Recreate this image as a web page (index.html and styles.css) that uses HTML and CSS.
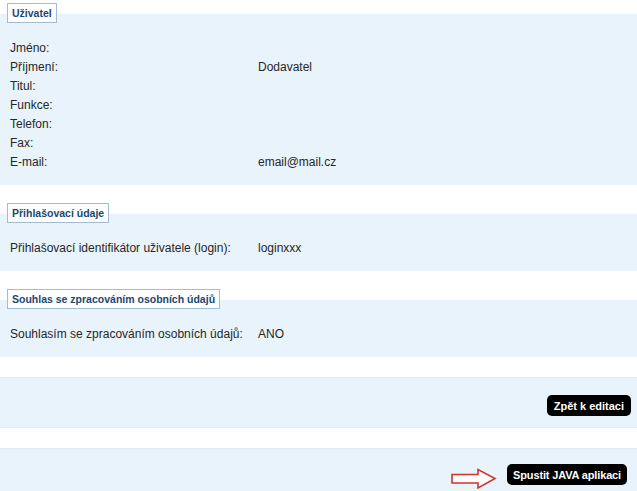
FILE: index.html
```html
<!DOCTYPE html>
<html lang="cs">
<head>
    <meta charset="UTF-8">
    <meta name="viewport" content="width=device-width, initial-scale=1.0">
    <title>Uživatel</title>
    <link rel="stylesheet" href="styles.css">
</head>
<body>
    <div class="panel">
        <div class="legend">Uživatel</div>
        <div class="rows">
            <span>Jméno:</span><span></span>
            <span>Příjmení:</span><span>Dodavatel</span>
            <span>Titul:</span><span></span>
            <span>Funkce:</span><span></span>
            <span>Telefon:</span><span></span>
            <span>Fax:</span><span></span>
            <span>E-mail:</span><span>email@mail.cz</span>
        </div>
    </div>

    <div class="panel">
        <div class="legend">Přihlašovací údaje</div>
        <div class="rows">
            <span>Přihlašovací identifikátor uživatele (login):</span><span>loginxxx</span>
        </div>
    </div>

    <div class="panel">
        <div class="legend">Souhlas se zpracováním osobních údajů</div>
        <div class="rows">
            <span>Souhlasím se zpracováním osobních údajů:</span><span>ANO</span>
        </div>
    </div>

    <div class="actions edit">
        <button class="btn">Zpět k editaci</button>
    </div>

    <div class="actions run">
        <svg class="arrow" width="46" height="22" viewBox="0 0 46 22">
            <polygon points="1,6.5 27,6.5 27,1.5 44,10.5 27,20 27,15 1,15" fill="#fff" stroke="#d8302b" stroke-width="1.6"/>
        </svg>
        <button class="btn btn-java">Spustit JAVA aplikaci</button>
    </div>
</body>
</html>
```

FILE: styles.css
```css
body {
    margin: 0;
    padding-top: 14px;
    font-family: "Liberation Sans", Arial, sans-serif;
    font-size: 12px;
    color: #262626;
    background: #fff;
}

.panel {
    display: flow-root;
    background-color: #e9f3fc;
    padding-bottom: 13px;
    margin-bottom: 29px;
}

.legend {
    display: table;
    margin: -11px 0 0 7px;
    height: 18px;
    line-height: 18px;
    padding: 0 4px;
    border: 1px solid #a3bcd3;
    background: #fff;
    color: #1b4770;
    font-weight: bold;
    font-size: 10.5px;
}

.rows {
    display: grid;
    grid-template-columns: 248px 1fr;
    padding-left: 10px;
    margin-top: 16px;
    line-height: 19px;
}

.actions {
    display: flex;
    justify-content: flex-end;
    align-items: flex-start;
    background-color: #e9f3fc;
    border-top: 1px solid #e1edf7;
    border-bottom: 1px solid #e1edf7;
}

.edit {
    margin-top: -9px;
    padding: 17px 6px 11px 0;
}

.run {
    margin-top: 20px;
    padding: 15px 10px 8px 0;
    gap: 10px;
}

.btn {
    height: 21px;
    padding: 0 7px;
    border: none;
    border-radius: 5px;
    background: #000;
    color: #fff;
    font-family: "Liberation Sans", Arial, sans-serif;
    font-size: 11px;
    font-weight: bold;
    cursor: pointer;
}

.btn-java {
    padding: 0 6px;
    letter-spacing: -0.15px;
}

.arrow {
    display: block;
    margin-top: 4px;
}
```
